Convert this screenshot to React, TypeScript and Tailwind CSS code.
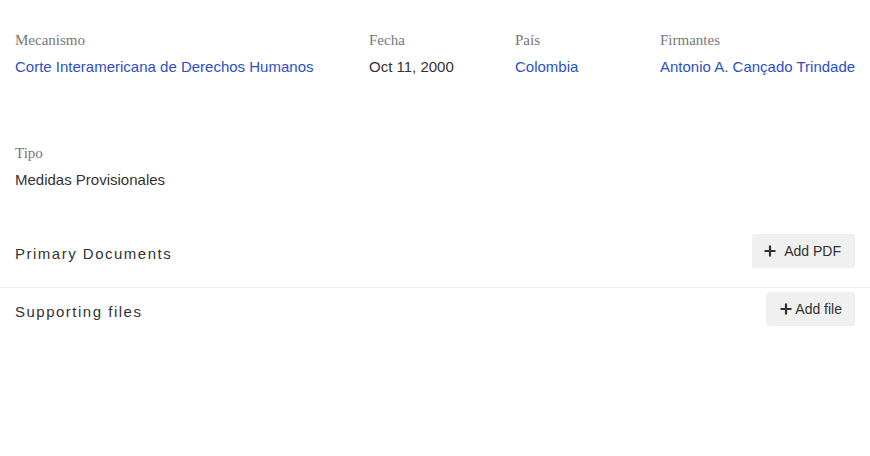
import React from "react";

const Label = ({ children }: { children: React.ReactNode }) => (
  <div className="text-[15px] leading-[20px] text-[#777777]" style={{ fontFamily: '"Liberation Serif", serif' }}>
    {children}
  </div>
);

const Value = ({ children, link }: { children: React.ReactNode; link?: boolean }) => (
  <div className={`mt-[7px] whitespace-nowrap text-[15px] leading-[20px] ${link ? "text-[#2c4fc7]" : "text-[#333333]"}`}>{children}</div>
);

const Plus = () => (
  <svg width="12" height="12" viewBox="0 0 12 12" className="shrink-0">
    <path d="M6 0.5V11.5M0.5 6H11.5" stroke="#333" strokeWidth="2.2" />
  </svg>
);

export default function App() {
  return (
    <div className="w-[870px] h-[456px] bg-white" style={{ fontFamily: '"Liberation Sans", Arial, sans-serif' }}>
      <div className="px-[15px] pt-[30px]">
        <div className="grid grid-cols-[354px_146px_145px_1fr]">
          <div>
            <Label>Mecanismo</Label>
            <Value link>Corte Interamericana de Derechos Humanos</Value>
          </div>
          <div>
            <Label>Fecha</Label>
            <Value>Oct 11, 2000</Value>
          </div>
          <div>
            <Label>País</Label>
            <Value link>Colombia</Value>
          </div>
          <div>
            <Label>Firmantes</Label>
            <Value link>Antonio A. Cançado Trindade</Value>
          </div>
        </div>
        <div className="mt-[66px]">
          <Label>Tipo</Label>
          <Value>Medidas Provisionales</Value>
        </div>
      </div>
      <div className="mt-[44px] flex items-center justify-between px-[15px] pb-[19px]">
        <div className="pt-[6px] text-[15px] tracking-[1.5px] text-[#333333]">Primary Documents</div>
        <button className="flex h-[34px] items-center gap-[8px] rounded-[3px] bg-[#f0f0f0] pl-[12px] pr-[14px] text-[14px] text-[#333333]">
          <Plus />
          <span>Add PDF</span>
        </button>
      </div>
      <div className="border-t border-[#eeeeee] flex items-center justify-between px-[15px] pt-[4px]">
        <div className="pt-[6px] text-[15px] tracking-[1.5px] text-[#333333]">Supporting files</div>
        <button className="flex h-[34px] items-center gap-[3px] rounded-[3px] bg-[#f0f0f0] pl-[14px] pr-[13px] text-[14px] text-[#333333]">
          <Plus />
          <span>Add file</span>
        </button>
      </div>
    </div>
  );
}
